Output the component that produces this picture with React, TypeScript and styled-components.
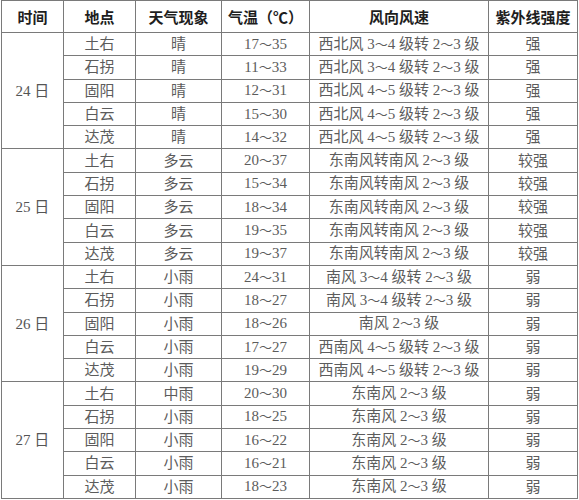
import React from 'react'
import styled, { createGlobalStyle } from 'styled-components'

interface Row {
    place: string
    weather: string
    temp: string
    wind: string
    uv: string
}

interface Day {
    date: string
    rows: Array<Row>
}

const days: Array<Day> = [
    {
        date: '24',
        rows: [
            { place: '土右', weather: '晴', temp: '17～35', wind: '西北风 3～4 级转 2～3 级', uv: '强' },
            { place: '石拐', weather: '晴', temp: '11～33', wind: '西北风 3～4 级转 2～3 级', uv: '强' },
            { place: '固阳', weather: '晴', temp: '12～31', wind: '西北风 4～5 级转 2～3 级', uv: '强' },
            { place: '白云', weather: '晴', temp: '15～30', wind: '西北风 4～5 级转 2～3 级', uv: '强' },
            { place: '达茂', weather: '晴', temp: '14～32', wind: '西北风 4～5 级转 2～3 级', uv: '强' },
        ],
    },
    {
        date: '25',
        rows: [
            { place: '土右', weather: '多云', temp: '20～37', wind: '东南风转南风 2～3 级', uv: '较强' },
            { place: '石拐', weather: '多云', temp: '15～34', wind: '东南风转南风 2～3 级', uv: '较强' },
            { place: '固阳', weather: '多云', temp: '18～34', wind: '东南风转南风 2～3 级', uv: '较强' },
            { place: '白云', weather: '多云', temp: '19～35', wind: '东南风转南风 2～3 级', uv: '较强' },
            { place: '达茂', weather: '多云', temp: '19～37', wind: '东南风转南风 2～3 级', uv: '较强' },
        ],
    },
    {
        date: '26',
        rows: [
            { place: '土右', weather: '小雨', temp: '24～31', wind: '南风 3～4 级转 2～3 级', uv: '弱' },
            { place: '石拐', weather: '小雨', temp: '18～27', wind: '南风 3～4 级转 2～3 级', uv: '弱' },
            { place: '固阳', weather: '小雨', temp: '18～26', wind: '南风 2～3 级', uv: '弱' },
            { place: '白云', weather: '小雨', temp: '17～27', wind: '西南风 4～5 级转 2～3 级', uv: '弱' },
            { place: '达茂', weather: '小雨', temp: '19～29', wind: '西南风 4～5 级转 2～3 级', uv: '弱' },
        ],
    },
    {
        date: '27',
        rows: [
            { place: '土右', weather: '中雨', temp: '20～30', wind: '东南风 2～3 级', uv: '弱' },
            { place: '石拐', weather: '小雨', temp: '18～25', wind: '东南风 2～3 级', uv: '弱' },
            { place: '固阳', weather: '小雨', temp: '16～22', wind: '东南风 2～3 级', uv: '弱' },
            { place: '白云', weather: '小雨', temp: '16～21', wind: '东南风 2～3 级', uv: '弱' },
            { place: '达茂', weather: '小雨', temp: '18～23', wind: '东南风 2～3 级', uv: '弱' },
        ],
    },
]

const headings = ['时间', '地点', '天气现象', '气温（℃）', '风向风速', '紫外线强度']
const columnWidths = [62, 72, 86, 88, 179, 89]

/**
 * Splits a range text so the wave dash is set a little smaller, as in the printed table
 */
const withWaves = (text: string) => {
    const parts = text.split('～')
    return parts.map((part, index) => (
        <React.Fragment key={index}>
            {part}
            {index < parts.length - 1 && <Wave>～</Wave>}
        </React.Fragment>
    ))
}

const App: React.FC = () => {
    return (
        <React.Fragment>
            <GlobalStyle />
            <WeatherTable>
                <colgroup>
                    {columnWidths.map((width, index) => (
                        <col key={index} style={{ width }} />
                    ))}
                </colgroup>
                <thead>
                    <HeadRow>
                        {headings.map((heading) => (
                            <TableLegend key={heading}>{heading}</TableLegend>
                        ))}
                    </HeadRow>
                </thead>
                <tbody>
                    {days.map((day) =>
                        day.rows.map((row, index) => (
                            <BodyRow key={day.date + row.place}>
                                {index === 0 && (
                                    <DateCell rowSpan={day.rows.length}>
                                        {day.date} 日
                                    </DateCell>
                                )}
                                <Cell>{row.place}</Cell>
                                <Cell>{row.weather}</Cell>
                                <Cell>{withWaves(row.temp)}</Cell>
                                <Cell>{withWaves(row.wind)}</Cell>
                                <Cell>{row.uv}</Cell>
                            </BodyRow>
                        ))
                    )}
                </tbody>
            </WeatherTable>
        </React.Fragment>
    )
}

export default App

const GlobalStyle = createGlobalStyle`
    body {
        margin: 0;
        background: #ffffff;
        font-family: "Liberation Serif", "Noto Sans CJK SC", serif;
    }
`

const WeatherTable = styled.table`
    border-collapse: collapse;
    table-layout: fixed;
    width: 577px;
    margin-left: 1px;
    border: 1px solid #7a7a7a;
`

const HeadRow = styled.tr`
    height: 32px;
`

const BodyRow = styled.tr`
    height: 23.3px;
`

const TableLegend = styled.th`
    border: 1px solid #7a7a7a;
    padding: 0;
    font-family: "Noto Sans CJK SC", sans-serif;
    font-weight: 700;
    font-size: 15px;
    color: #1e1e1e;
    text-align: center;
    vertical-align: middle;
`

const Cell = styled.td`
    border: 1px solid #7a7a7a;
    padding: 0;
    font-size: 15px;
    line-height: 20px;
    color: #5c5c5c;
    text-align: center;
    vertical-align: middle;
    white-space: nowrap;
`

const DateCell = styled(Cell)`
    color: #555555;
`

const Wave = styled.span`
    font-size: 13px;
`
